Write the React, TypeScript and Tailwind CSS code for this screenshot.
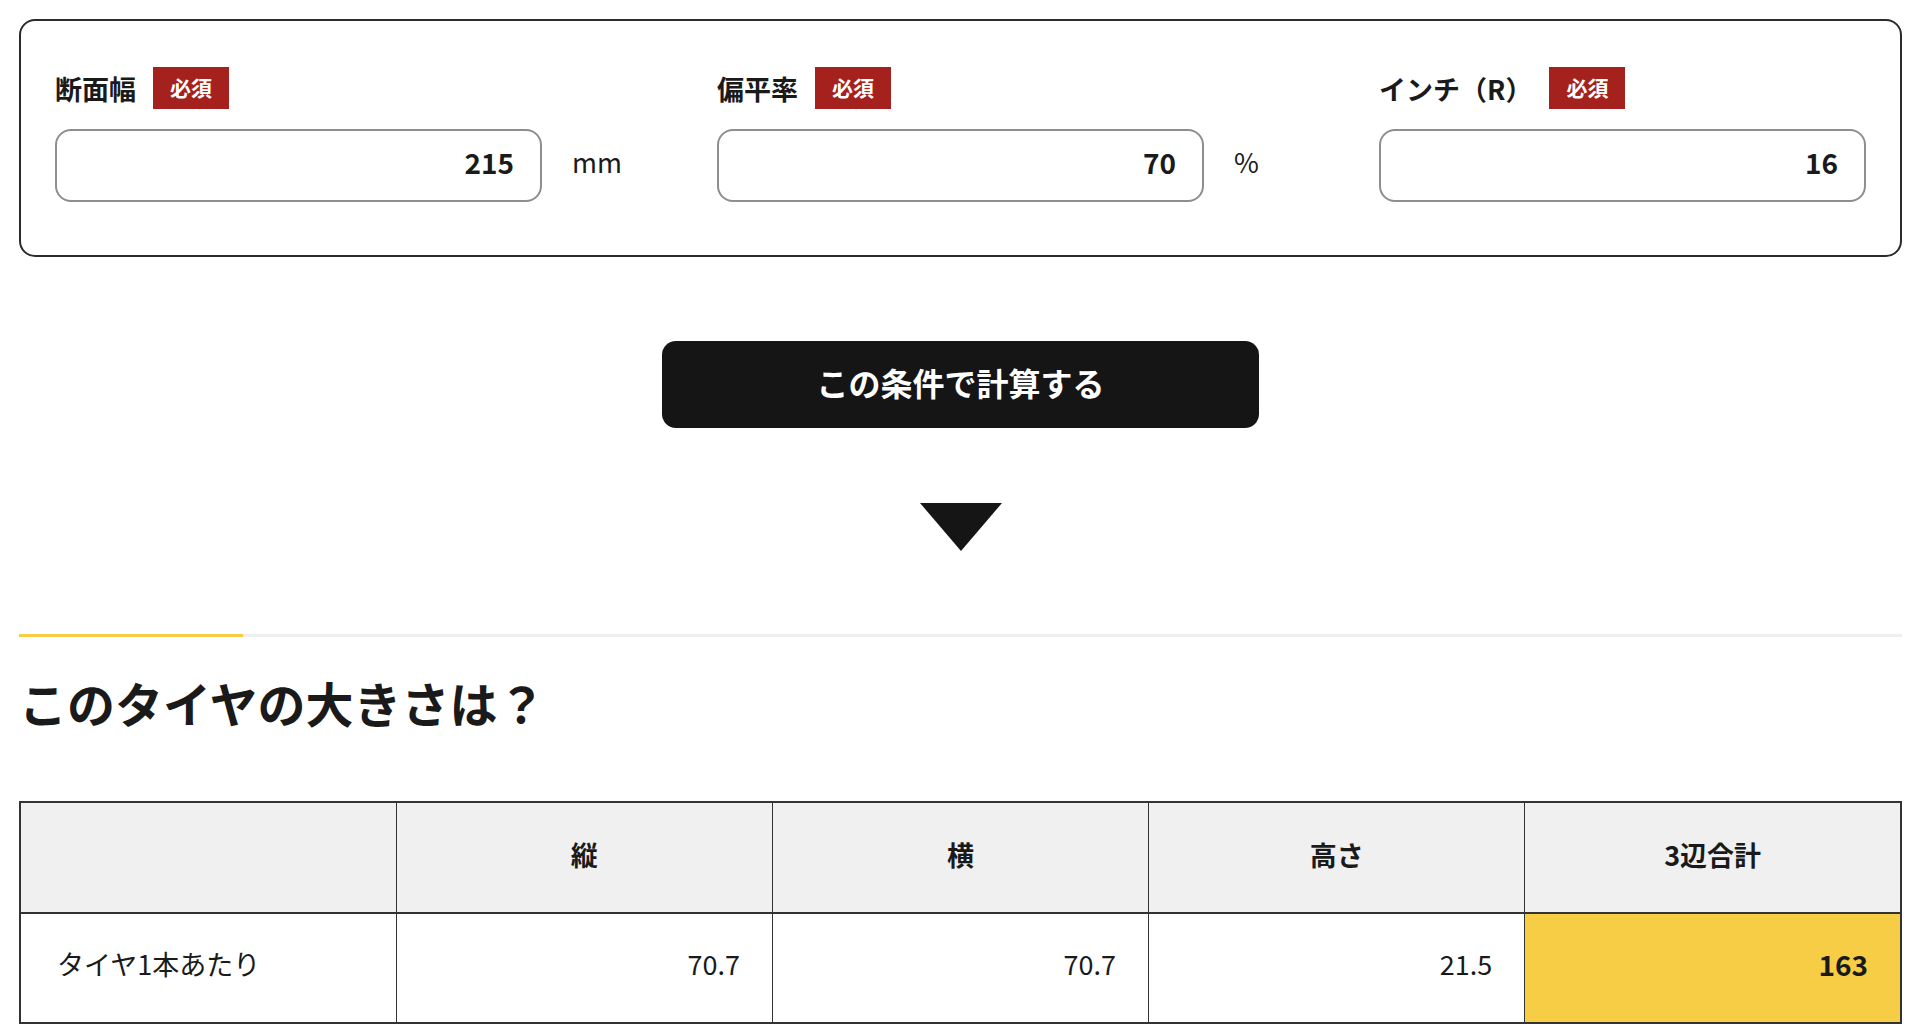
import React from 'react';

type Field = {
  label: string;
  value: string;
  unit?: string;
};

const fields: Field[] = [
  { label: '断面幅', value: '215', unit: 'mm' },
  { label: '偏平率', value: '70', unit: '%' },
  { label: 'インチ（R）', value: '16' },
];

const RequiredBadge: React.FC = () => (
  <span className="ml-[17px] inline-flex h-[42px] items-center bg-[#a5211d] px-[17px] text-[21px] font-bold text-white">
    必須
  </span>
);

const SizeField: React.FC<{ field: Field; last?: boolean }> = ({ field, last }) => (
  <div className={last ? 'w-[487px]' : 'w-[662px]'}>
    <div className="flex h-[42px] items-center">
      <span className="text-[27px] font-bold leading-none">{field.label}</span>
      <RequiredBadge />
    </div>
    <div className="mt-[20px] flex items-center">
      <input
        type="text"
        defaultValue={field.value}
        className="h-[73px] w-[487px] rounded-[16px] border-2 border-[#8e8e8e] bg-white pb-[8px] pr-[26px] text-right text-[28px] font-bold outline-none"
      />
      {field.unit && <span className="ml-[30px] pb-[8px] text-[27px] leading-none">{field.unit}</span>}
    </div>
  </div>
);

const App: React.FC = () => {
  const head = ['', '縦', '横', '高さ', '3辺合計'];
  const values = ['70.7', '70.7', '21.5'];

  return (
    <div className="min-h-screen bg-white pl-[19px] pr-[18px] pt-[19px] font-['Noto_Sans_CJK_JP','Noto_Sans',sans-serif] text-[#1a1a1a]">
      {/* input card */}
      <div className="rounded-[16px] border-2 border-[#2b2b2b] px-[34px] pb-[53px] pt-[46px]">
        <div className="flex">
          {fields.map((f, i) => (
            <SizeField key={f.label} field={f} last={i === fields.length - 1} />
          ))}
        </div>
      </div>

      <div className="mt-[84px] flex justify-center">
        <button className="h-[87px] w-[597px] rounded-[14px] bg-[#151515] pb-[5px] text-[32px] font-bold text-white">
          この条件で計算する
        </button>
      </div>

      <div className="mt-[75px] flex justify-center">
        <svg width="82" height="48" viewBox="0 0 82 48">
          <polygon points="0,0 82,0 41,48" fill="#151515" />
        </svg>
      </div>

      {/* result */}
      <div className="mt-[83px] flex h-[3px]">
        <div className="w-[224px] bg-[#f6cd45]" />
        <div className="flex-1 bg-[#efefef]" />
      </div>

      <h2 className="mt-[41px] text-[48px] font-bold leading-none">このタイヤの大きさは？</h2>

      <table className="mt-[75px] w-full table-fixed border-collapse border-2 border-[#333]">
        <thead>
          <tr className="h-[111px] bg-[#f0f0f0]">
            {head.map((h, i) => (
              <th key={i} className="border border-b-2 border-[#333] pb-[5px] text-center text-[27px] font-bold">
                {h}
              </th>
            ))}
          </tr>
        </thead>
        <tbody>
          <tr className="h-[110px]">
            <td className="border border-[#333] pb-[8px] pl-[36px] text-left text-[27px]">タイヤ1本あたり</td>
            {values.map((v, i) => (
              <td key={i} className="border border-[#333] pb-[8px] pr-[32px] text-right text-[27px]">
                {v}
              </td>
            ))}
            <td className="border border-[#333] bg-[#f6cd45] pb-[8px] pr-[32px] text-right text-[28px] font-bold">163</td>
          </tr>
        </tbody>
      </table>
    </div>
  );
};

export default App;
